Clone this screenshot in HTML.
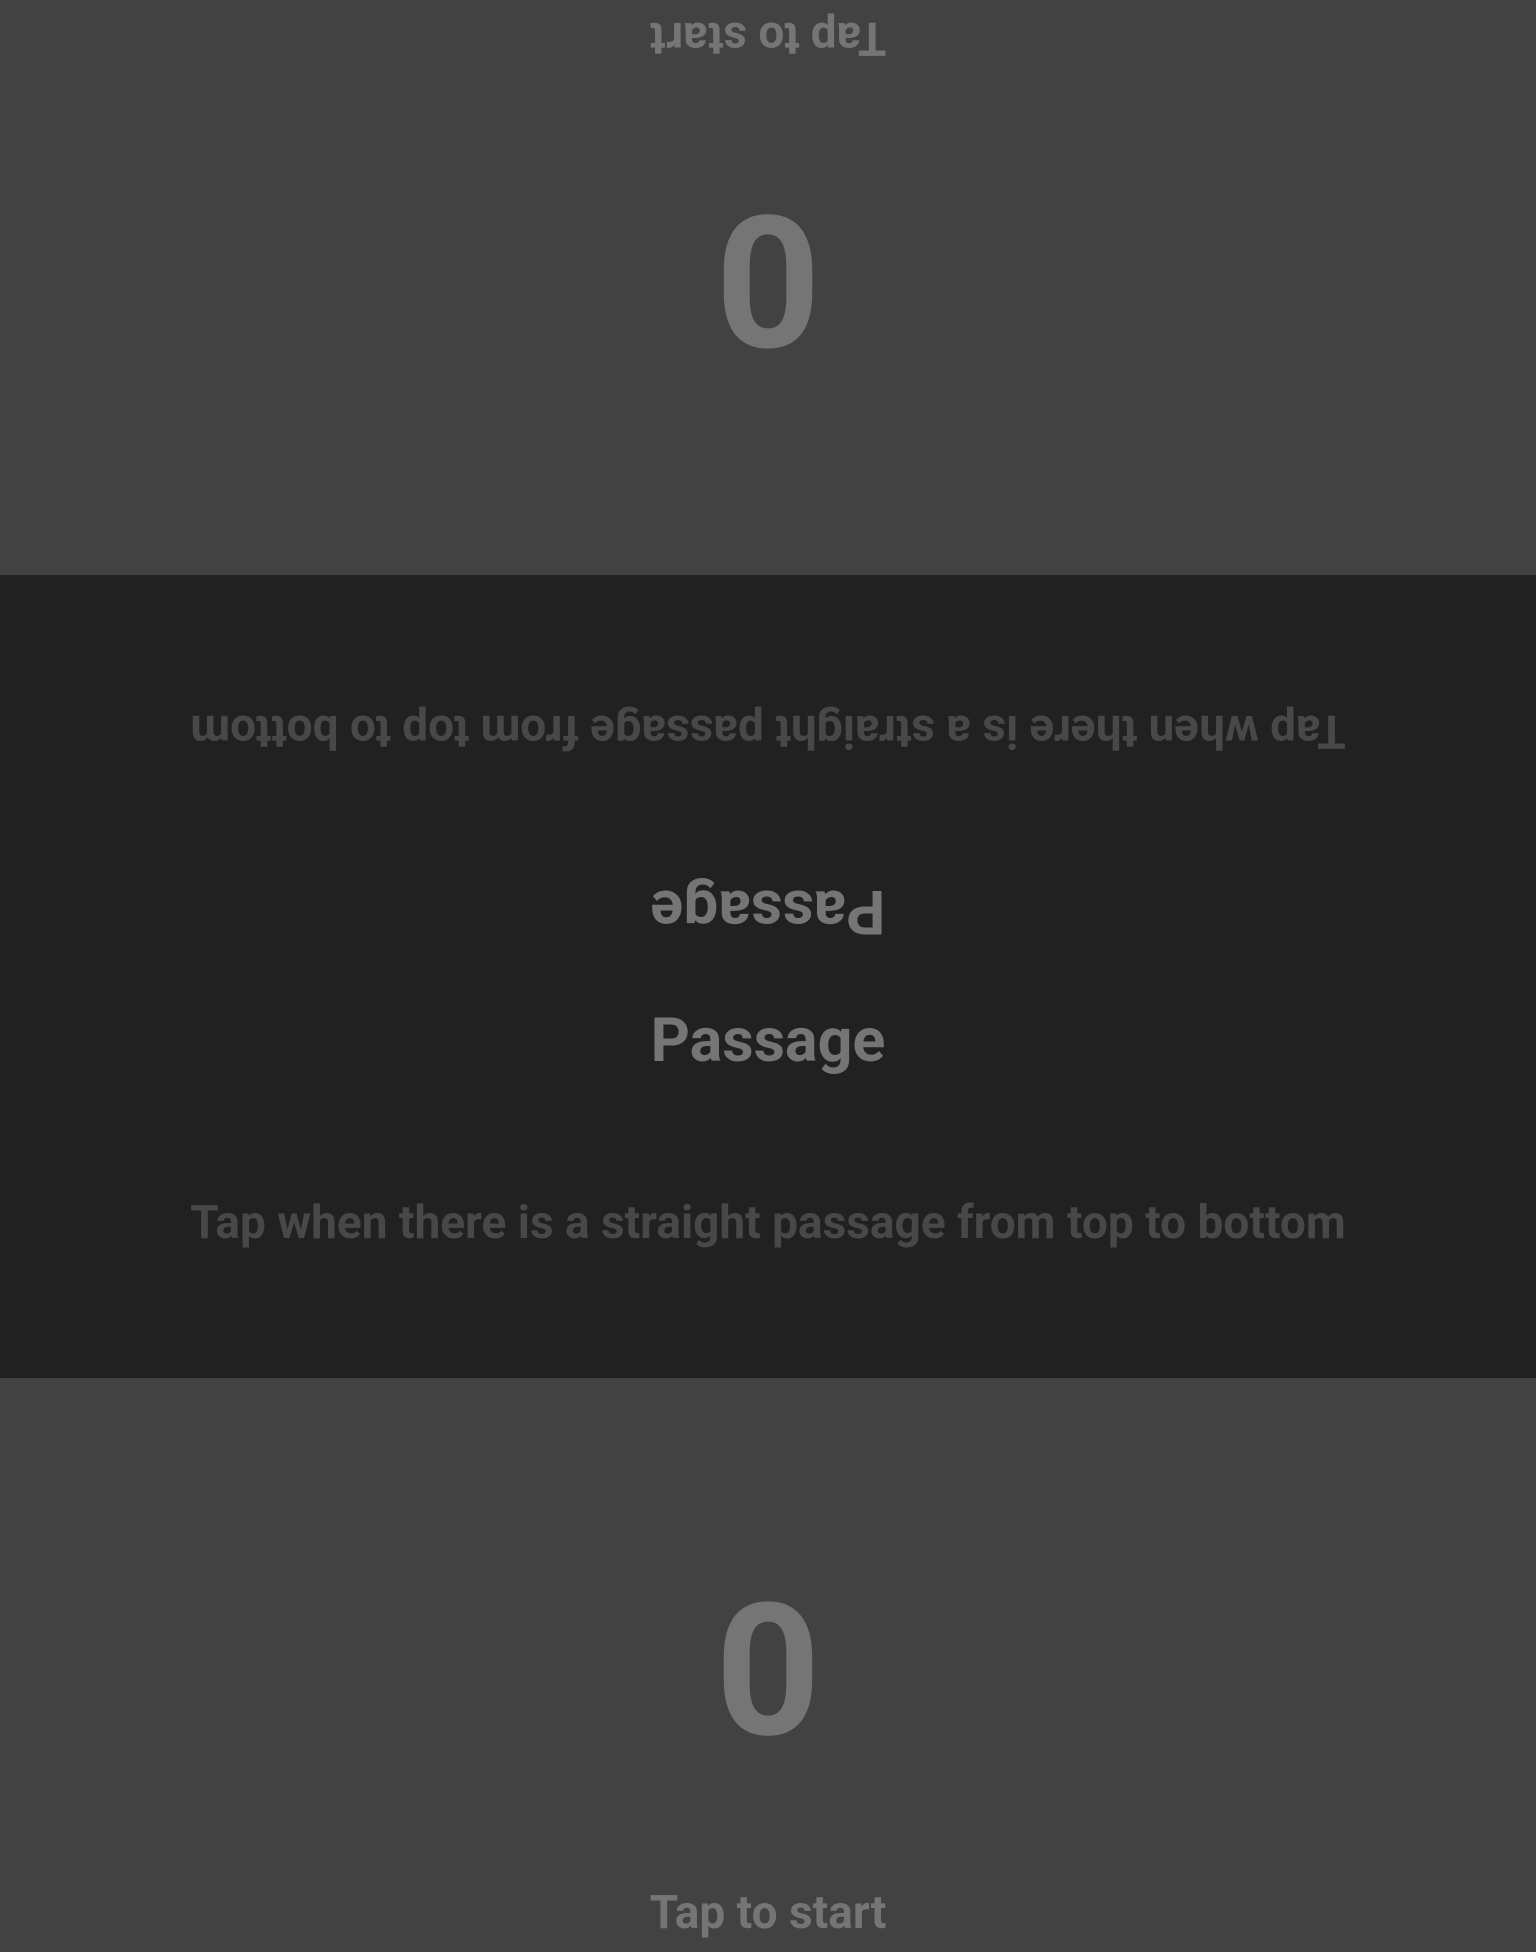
<!DOCTYPE html>
<html><head><style>
html,body{margin:0;padding:0;}
body{width:1536px;height:1952px;position:relative;overflow:hidden;background:#424242;font-family:"Roboto","Liberation Sans",sans-serif;font-weight:bold;}
.band{position:absolute;left:0;width:1536px;}
.t{position:absolute;left:0;width:1536px;text-align:center;line-height:1;white-space:nowrap;}
.r{transform:rotate(180deg);}
.g{color:#757575;}
.d{color:#484848;}
</style></head><body>
<div class="band" style="top:0;height:575px;background:#424242"></div>
<div class="band" style="top:575px;height:803px;background:#212121"></div>
<div class="band" style="top:1378px;height:574px;background:#424242"></div>

<div class="t r g" style="top:15px;font-size:46px;">Tap to start</div>
<div class="t r g" style="top:187px;font-size:184px;">0</div>

<div class="t r d" style="top:708px;font-size:46px;">Tap when there is a straight passage from top to bottom</div>
<div class="t r g" style="top:881px;font-size:61px;">Passage</div>
<div class="t g" style="top:1010px;font-size:61px;">Passage</div>
<div class="t d" style="top:1200px;font-size:46px;">Tap when there is a straight passage from top to bottom</div>

<div class="t g" style="top:1579px;font-size:184px;">0</div>
<div class="t g" style="top:1890px;font-size:46px;">Tap to start</div>
</body></html>
